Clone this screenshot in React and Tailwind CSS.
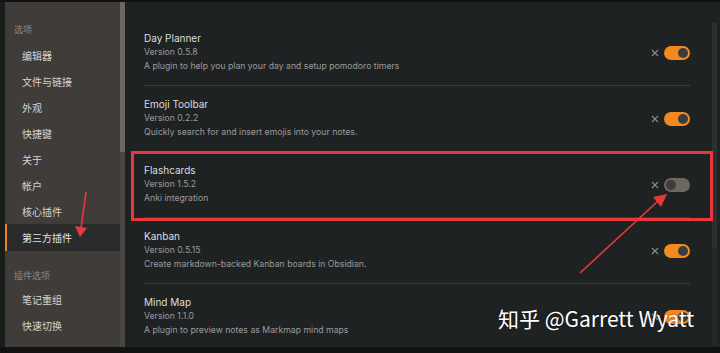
import React from "react";

const plugins = [
  { name: "Day Planner", version: "Version 0.5.8", desc: "A plugin to help you plan your day and setup pomodoro timers", on: true },
  { name: "Emoji Toolbar", version: "Version 0.2.2", desc: "Quickly search for and insert emojis into your notes.", on: true },
  { name: "Flashcards", version: "Version 1.5.2", desc: "Anki integration", on: false },
  { name: "Kanban", version: "Version 0.5.15", desc: "Create markdown-backed Kanban boards in Obsidian.", on: true },
  { name: "Mind Map", version: "Version 1.1.0", desc: "A plugin to preview notes as Markmap mind maps", on: true },
];

const cjk = { fontFamily: '"Noto Sans CJK SC", "Noto Sans", sans-serif' };
const inter = { fontFamily: 'Inter, "Noto Sans", sans-serif' };

function Toggle({ on }) {
  return (
    <div className="flex items-center gap-[5px]">
      <svg width="8" height="8" viewBox="0 0 8 8" className="text-[#8a8c8d]">
        <path d="M1 1 L7 7 M7 1 L1 7" stroke="currentColor" strokeWidth="1.1" />
      </svg>
      <div
        className={
          on
            ? "w-[26px] h-[14px] rounded-full bg-[#f28a1f] flex items-center justify-end px-[2px]"
            : "w-[26px] h-[14px] rounded-full bg-[#6f665d] flex items-center justify-start px-[2px]"
        }
      >
        <div className="w-[10px] h-[10px] rounded-full bg-[#3c3c3c]" />
      </div>
    </div>
  );
}

function SideItem({ label, active }) {
  return active ? (
    <div className="h-[27px] flex items-center bg-[#2a2c2c] border-l-[2px] border-[#e8862a] pl-[15px] text-[10px] text-[#e2e2e2]">
      {label}
    </div>
  ) : (
    <div className="h-[26px] flex items-center pl-[17px] text-[10px] text-[#d6d4d2]">{label}</div>
  );
}

export default function App() {
  return (
    <div className="relative w-[720px] h-[353px] bg-[#141616] flex flex-col overflow-hidden">
      <div className="h-[2px] bg-[#101111]" />
      <div className="flex flex-1 min-h-0">
        <div className="w-[5px] bg-[#1a1b1b]" />
        <div className="w-[115px] bg-[#403c39] pt-[18px]" style={cjk}>
          <div className="h-[20px] flex items-center pl-[9px] text-[9px] text-[#8c8784]">选项</div>
          <div className="h-[2px]" />
          <SideItem label="编辑器" />
          <SideItem label="文件与链接" />
          <SideItem label="外观" />
          <SideItem label="快捷键" />
          <SideItem label="关于" />
          <SideItem label="帐户" />
          <SideItem label="核心插件" />
          <SideItem label="第三方插件" active />
          <div className="h-[15px]" />
          <div className="h-[20px] flex items-center pl-[9px] text-[9px] text-[#8c8784]">插件选项</div>
          <SideItem label="笔记重组" />
          <SideItem label="快速切换" />
        </div>
        <div className="w-[5px] bg-[#4a4643] flex flex-col">
          <div className="h-[150px] bg-[#6a6663]" />
        </div>
        <div className="flex-1 bg-[#1f2223] flex" style={inter}>
          <div className="flex-1 pt-[18px] pl-[19px] pr-[22px]">
            {plugins.map((p, i) => (
              <div key={p.name} className={i < plugins.length - 1 ? "flex items-center py-[11px] border-b border-[#383c3d]" : "flex items-center py-[11px]"}>
                <div className="flex-1">
                  <div className="h-[14px] leading-[14px] text-[10px] text-[#dcddde]">{p.name}</div>
                  <div className="h-[14px] leading-[14px] text-[8.7px] text-[#9a9b9c]">{p.version}</div>
                  <div className="h-[15px] leading-[15px] text-[8.7px] text-[#9a9b9c]">{p.desc}</div>
                </div>
                <Toggle on={p.on} />
              </div>
            ))}
          </div>
          <div className="w-[5px] flex flex-col pt-[21px] pb-[2px] mr-[3px]">
            <div className="h-[225px] bg-[#2d3031]" />
            <div className="flex-1 bg-[#26292a]" />
          </div>
        </div>
      </div>
      <div className="h-[6px] bg-[#101111]" />

      {/* red highlight box */}
      <div className="absolute left-[131px] top-[151px] w-[582px] h-[70px] border-[3px] border-[#e8383d]" />

      {/* arrows */}
      <svg className="absolute left-0 top-0" width="720" height="353" viewBox="0 0 720 353">
        <line x1="86" y1="192" x2="81" y2="228" stroke="#e8383d" strokeWidth="1.6" />
        <polygon points="80,237 75,226 87,228" fill="#e8383d" />
        <line x1="580" y1="273" x2="658" y2="201" stroke="#e8383d" strokeWidth="1.6" />
        <polygon points="667,194 653,197 661,207" fill="#e8383d" />
      </svg>

      {/* watermark */}
      <div
        className="absolute left-[498px] top-[304px] text-[21px] leading-[28px] text-white"
        style={{ ...cjk, textShadow: "0 0 2px rgba(0,0,0,0.5)" }}
      >
        知乎 @Garrett Wyatt
      </div>
    </div>
  );
}
